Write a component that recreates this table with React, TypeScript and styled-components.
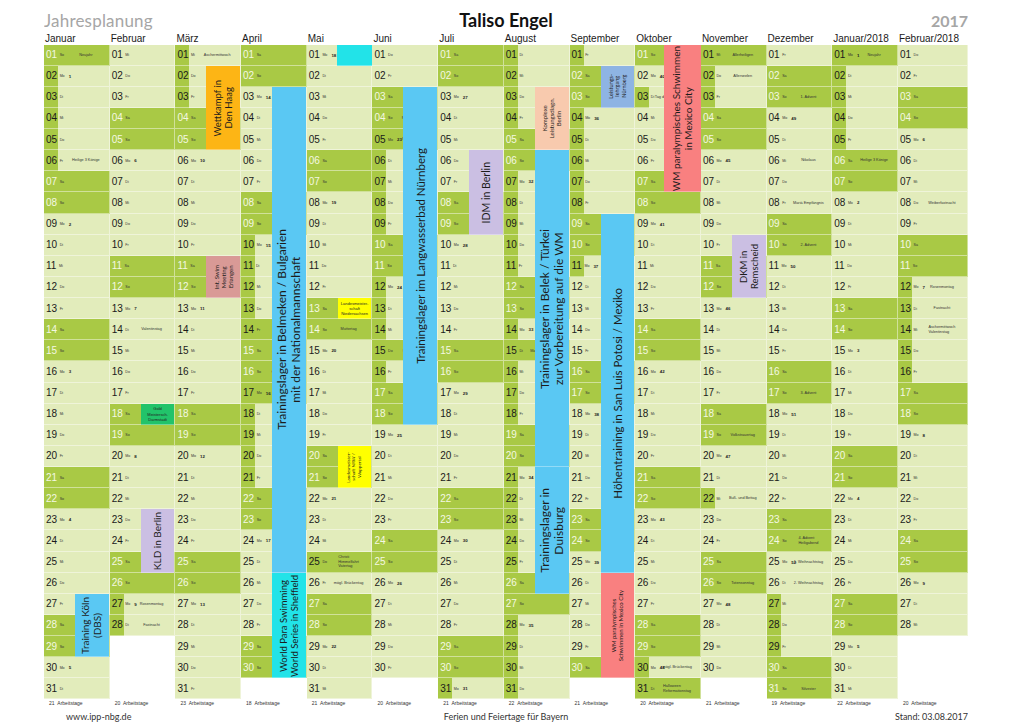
import React from 'react';
import styled, { createGlobalStyle } from 'styled-components';

const ROW_H = 21.13;
const COLS = 'repeat(13, 65.7px) 70px';

const LIGHT = '#e2ecbb';
const DARK = '#a9c945';
const BLUE = '#5ac8f3';
const CYAN = '#22e3e8';
const LILAC = '#cbbfe3';
const YELLOW = '#ffff00';
const SALMON = '#f98080';
const PEACH = '#f8caae';

type Kind = 'n' | 'w' | 'f' | 'h';

interface MonthDef {
  label: string;
  year: number;
  month: number;
  work: number;
  ferien: [number, number][];
  full?: number[];
  notes?: Record<number, string>;
}

interface EventDef {
  col: number;
  from: number;
  to: number;
  color: string;
  lines: string[];
  size?: number;
  flat?: boolean;
  left?: number;
  right?: number;
}

const WD = ['So', 'Mo', 'Di', 'Mi', 'Do', 'Fr', 'Sa'];

const months: MonthDef[] = [
  { label: 'Januar', year: 2017, month: 0, work: 21, ferien: [[2, 6]], notes: { 1: 'Neujahr', 6: 'Heilige 3 Könige' } },
  { label: 'Februar', year: 2017, month: 1, work: 20, ferien: [[27, 28]], notes: { 14: 'Valentinstag', 27: 'Rosenmontag', 28: 'Fastnacht' } },
  { label: 'März', year: 2017, month: 2, work: 23, ferien: [[1, 3]], notes: { 1: 'Aschermittwoch' } },
  { label: 'April', year: 2017, month: 3, work: 18, ferien: [[10, 21]], full: [14, 17], notes: { 14: 'Karfreitag', 16: 'Ostersonntag', 17: 'Ostermontag' } },
  {
    label: 'Mai', year: 2017, month: 4, work: 21, ferien: [], full: [25],
    notes: { 1: 'Tag der Arbeit', 14: 'Muttertag', 25: 'Christi\nHimmelfahrt\nVatertag', 26: 'mögl. Brückentag' },
  },
  { label: 'Juni', year: 2017, month: 5, work: 20, ferien: [[6, 16]], full: [5, 15], notes: { 4: 'Pfingstsonntag', 5: 'Pfingstmontag', 15: 'Fronleichnam' } },
  { label: 'Juli', year: 2017, month: 6, work: 21, ferien: [[31, 31]] },
  { label: 'August', year: 2017, month: 7, work: 22, ferien: [[1, 31]], full: [15], notes: { 15: 'Mariä Himmelfahrt' } },
  { label: 'September', year: 2017, month: 8, work: 21, ferien: [[1, 11]] },
  {
    label: 'Oktober', year: 2017, month: 9, work: 20, ferien: [[3, 3], [30, 30]], full: [31],
    notes: { 3: 'Tag der Deutschen Einheit', 30: 'mögl. Brückentag', 31: 'Halloween\nReformationstag' },
  },
  {
    label: 'November', year: 2017, month: 10, work: 21, ferien: [[2, 3], [22, 22]], full: [1],
    notes: { 1: 'Allerheiligen', 2: 'Allerseelen', 19: 'Volkstrauertag', 22: 'Buß- und Bettag', 26: 'Totensonntag' },
  },
  {
    label: 'Dezember', year: 2017, month: 11, work: 19, ferien: [[27, 29]],
    notes: {
      3: '1. Advent', 6: 'Nikolaus', 8: 'Mariä Empfängnis', 10: '2. Advent', 17: '3. Advent',
      24: '4. Advent\nHeiligabend', 25: '1. Weihnachtstag', 26: '2. Weihnachtstag', 31: 'Silvester',
    },
  },
  { label: 'Januar/2018', year: 2018, month: 0, work: 22, ferien: [[2, 5]], full: [1], notes: { 1: 'Neujahr', 6: 'Heilige 3 Könige' } },
  {
    label: 'Februar/2018', year: 2018, month: 1, work: 20, ferien: [[12, 16]],
    notes: { 8: 'Weiberfastnacht', 12: 'Rosenmontag', 13: 'Fastnacht', 14: 'Aschermittwoch\nValentinstag' },
  },
];

const events: EventDef[] = [
  { col: 0, from: 27, to: 29, color: BLUE, lines: ['Training Köln', '(DBS)'], size: 10 },
  { col: 1, from: 18, to: 18, color: '#22c36a', lines: ['Gold', 'Meistersch.', 'Darmstadt'], size: 4, flat: true },
  { col: 1, from: 23, to: 25, color: LILAC, lines: ['KLD in Berlin'], size: 10 },
  { col: 2, from: 2, to: 5, color: '#fdb515', lines: ['Wettkampf in', 'Den Haag'], size: 9.5 },
  { col: 2, from: 11, to: 12, color: '#d99a96', lines: ['Int. Swim', 'Meeting', 'Erlangen'], size: 6 },
  { col: 3, from: 3, to: 25, color: BLUE, lines: ['Trainingslager in Belmeken / Bulgarien', 'mit der Nationalmannschaft'], size: 12 },
  { col: 3, from: 26, to: 30, color: CYAN, lines: ['World Para Swimming', 'World Series in Sheffield'], size: 9.5 },
  { col: 4, from: 1, to: 1, color: CYAN, lines: [], left: 30, right: 0 },
  { col: 4, from: 13, to: 13, color: YELLOW, lines: ['Landesmeister-', 'schaft', 'Niedersachsen'], size: 4, flat: true },
  { col: 4, from: 20, to: 21, color: YELLOW, lines: ['Landesmeister-', 'schaft NRW /', 'Wuppertal'], size: 4.6 },
  { col: 5, from: 3, to: 18, color: BLUE, lines: ['Trainingslager im Langwasserbad Nürnberg'], size: 11.5 },
  { col: 6, from: 6, to: 9, color: LILAC, lines: ['IDM in Berlin'], size: 10.5 },
  { col: 7, from: 3, to: 5, color: PEACH, lines: ['Komplexe', 'Leistungsdiagn.', 'Berlin'], size: 6 },
  { col: 7, from: 6, to: 20, color: BLUE, lines: ['Trainingslager in Belek / Türkei', 'zur Vorbereitung auf die WM'], size: 12 },
  { col: 7, from: 21, to: 26, color: BLUE, lines: ['Trainingslager in', 'Duisburg'], size: 12 },
  { col: 8, from: 2, to: 3, color: '#8eb4e3', lines: ['Leistungs-', 'lehrgang', 'Nürnberg'], size: 5.5 },
  { col: 8, from: 9, to: 25, color: BLUE, lines: ['Höhentraining in San Luis Potosi / Mexiko'], size: 11.5 },
  { col: 8, from: 26, to: 30, color: SALMON, lines: ['WM paralympisches', 'Schwimmen in Mexico City'], size: 6 },
  { col: 9, from: 1, to: 7, color: SALMON, lines: ['WM paralympisches Schwimmen', 'in Mexico City'], size: 10, left: 29, right: 0 },
  { col: 10, from: 10, to: 12, color: LILAC, lines: ['DKM in', 'Remscheid'], size: 9.5 },
];

function isoWeek(d: Date) {
  const t = new Date(Date.UTC(d.getFullYear(), d.getMonth(), d.getDate()));
  const day = t.getUTCDay() || 7;
  t.setUTCDate(t.getUTCDate() + 4 - day);
  const start = new Date(Date.UTC(t.getUTCFullYear(), 0, 1));
  return Math.ceil(((t.getTime() - start.getTime()) / 86400000 + 1) / 7);
}

function kindOf(m: MonthDef, d: number): Kind {
  const dow = new Date(m.year, m.month, d).getDay();
  if (dow === 0 || dow === 6) return 'w';
  if (m.full?.includes(d)) return 'h';
  if (m.ferien.some(([a, b]) => d >= a && d <= b)) return 'f';
  return 'n';
}

function App() {
  return (
    <>
      <GlobalStyle />
      <Sheet>
        <TitleBar>
          <Subtitle>Jahresplanung</Subtitle>
          <Name>Taliso Engel</Name>
          <Year>2017</Year>
        </TitleBar>

        <MonthRow>
          {months.map((m) => (
            <MonthLabel key={m.label}>{m.label}</MonthLabel>
          ))}
        </MonthRow>

        <Board>
          {months.map((m, ci) => {
            const count = new Date(m.year, m.month + 1, 0).getDate();
            const days = Array.from({ length: count }, (_, i) => i + 1);
            return (
              <Column key={m.label}>
                {days.map((d) => {
                  const date = new Date(m.year, m.month, d);
                  const dow = date.getDay();
                  const kind = kindOf(m, d);
                  const note = m.notes?.[d];
                  return (
                    <DayCell key={d} $kind={kind}>
                      <Meta>
                        <Num $white={kind === 'w'}>{String(d).padStart(2, '0')}</Num>
                        <Wd>{WD[dow]}</Wd>
                        {dow === 1 && <Kw>{isoWeek(date)}</Kw>}
                      </Meta>
                      {note && <Note>{note}</Note>}
                    </DayCell>
                  );
                })}

                {events
                  .filter((e) => e.col === ci)
                  .map((e, i) => (
                    <EventBar
                      key={i}
                      $color={e.color}
                      $left={e.left ?? 31}
                      $right={e.right ?? 1}
                      style={{ top: (e.from - 1) * ROW_H, height: (e.to - e.from + 1) * ROW_H }}
                    >
                      {e.lines.length > 0 &&
                        (e.flat ? (
                          <FlatText $size={e.size ?? 4}>
                            {e.lines.map((l) => (
                              <div key={l}>{l}</div>
                            ))}
                          </FlatText>
                        ) : (
                          <BarText $size={e.size ?? 10}>
                            {e.lines.map((l) => (
                              <div key={l}>{l}</div>
                            ))}
                          </BarText>
                        ))}
                    </EventBar>
                  ))}
              </Column>
            );
          })}
        </Board>

        <WorkRow>
          {months.map((m) => (
            <WorkLabel key={m.label}>
              {m.work}&nbsp;&nbsp;Arbeitstage
            </WorkLabel>
          ))}
        </WorkRow>

        <BottomBar>
          <Site>www.ipp-nbg.de</Site>
          <span>Ferien und Feiertage für Bayern</span>
          <Stand>Stand: 03.08.2017</Stand>
        </BottomBar>
      </Sheet>
    </>
  );
}

// Styles
const GlobalStyle = createGlobalStyle`
  html, body {
    margin: 0;
    background: #fff;
  }
  body {
    font-family: 'Liberation Sans', Arial, sans-serif;
    color: #222;
  }
`;

const Sheet = styled.div`
  width: 924px;
  margin-left: 44px;
  height: 724px;
  overflow: hidden;
`;

const TitleBar = styled.header`
  display: grid;
  grid-template-columns: 1fr auto 1fr;
  align-items: end;
  height: 30px;
  padding-bottom: 1px;
  box-sizing: border-box;
  font-family: Lato, 'Open Sans', sans-serif;
  line-height: 1;
`;

const Subtitle = styled.span`
  font-size: 17px;
  color: #a6a6a6;
  letter-spacing: 0.2px;
`;

const Name = styled.h1`
  margin: 0;
  font-size: 18px;
  font-weight: 700;
  color: #111;
`;

const Year = styled.span`
  justify-self: end;
  font-size: 16px;
  font-weight: 700;
  color: #a6a6a6;
`;

const MonthRow = styled.div`
  display: grid;
  grid-template-columns: ${COLS};
  height: 14.5px;
  align-items: end;
`;

const MonthLabel = styled.div`
  font-size: 10px;
  line-height: 12px;
  padding-left: 1px;
  color: #1a1a1a;
`;

const Board = styled.div`
  display: grid;
  grid-template-columns: ${COLS};
  grid-template-rows: ${31 * ROW_H}px;
`;

const Column = styled.div`
  position: relative;
  display: grid;
  grid-template-rows: repeat(31, ${ROW_H}px);
`;

const DayCell = styled.div<{ $kind: Kind }>`
  display: grid;
  grid-template-columns: 1fr;
  align-items: center;
  background: ${(p) =>
    p.$kind === 'n'
      ? LIGHT
      : p.$kind === 'f'
      ? `linear-gradient(to right, ${DARK} 14px, ${LIGHT} 14px)`
      : DARK};
  box-shadow: inset -1px -1px 0 rgba(255, 255, 255, 0.45);
  overflow: hidden;
`;

const Meta = styled.div`
  grid-area: 1 / 1;
  display: flex;
  align-items: center;
  white-space: nowrap;
`;

const Num = styled.span<{ $white: boolean }>`
  padding-left: 2px;
  font-size: 10px;
  line-height: 1;
  color: ${(p) => (p.$white ? '#f4f8e2' : '#1a1a1a')};
`;

const Wd = styled.span`
  margin-left: 2.5px;
  font-size: 3.6px;
  color: #333;
`;

const Kw = styled.span`
  margin-left: 4px;
  font-size: 4.4px;
  font-weight: 700;
  color: #222;
`;

const Note = styled.span`
  grid-area: 1 / 1;
  justify-self: center;
  padding-left: 18px;
  font-size: 3.8px;
  line-height: 1.2;
  white-space: pre-line;
  text-align: left;
  color: #333;
`;

const EventBar = styled.div<{ $color: string; $left: number; $right: number }>`
  position: absolute;
  left: ${(p) => p.$left}px;
  right: ${(p) => p.$right}px;
  background: ${(p) => p.$color};
  display: flex;
  align-items: center;
  justify-content: center;
  overflow: hidden;
  box-shadow: inset 0 -1px 0 rgba(255, 255, 255, 0.35);
`;

const BarText = styled.div<{ $size: number }>`
  writing-mode: vertical-rl;
  transform: rotate(180deg);
  white-space: nowrap;
  text-align: center;
  font-family: Lato, 'Open Sans', sans-serif;
  font-size: ${(p) => p.$size}px;
  line-height: 1.18;
  color: #1c1c1c;
`;

const FlatText = styled.div<{ $size: number }>`
  white-space: nowrap;
  text-align: center;
  font-size: ${(p) => p.$size}px;
  line-height: 1.3;
  color: #222;
`;

const WorkRow = styled.div`
  display: grid;
  grid-template-columns: ${COLS};
  height: 8.5px;
  align-items: center;
`;

const WorkLabel = styled.div`
  padding-left: 5px;
  font-size: 5px;
  line-height: 1;
  color: #333;
`;

const BottomBar = styled.footer`
  display: grid;
  grid-template-columns: 1fr auto 1fr;
  align-items: center;
  height: 17px;
  font-family: Lato, 'Open Sans', sans-serif;
  font-size: 9px;
  color: #333;
`;

const Site = styled.span`
  padding-left: 22px;
`;

const Stand = styled.span`
  justify-self: end;
`;

export default App;
